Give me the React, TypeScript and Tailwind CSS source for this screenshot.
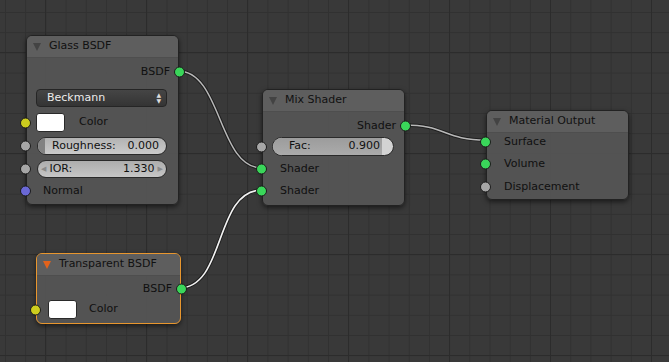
import type { ReactNode } from 'react';

const FONT = "font-['DejaVu_Sans','Liberation_Sans',sans-serif]";

type SocketKind = 'shader' | 'color' | 'value' | 'vector';

const socketColor: Record<SocketKind, string> = {
  shader: 'bg-[#3ad65a]',
  color: 'bg-[#cdcd1e]',
  value: 'bg-[#a6a6a6]',
  vector: 'bg-[#6a68d6]',
};

function Socket({ kind, side }: { kind: SocketKind; side: 'in' | 'out' }) {
  return (
    <span
      className={`absolute top-1/2 -translate-y-1/2 h-[11px] w-[11px] rounded-full border border-[#1b1b1b] ${socketColor[kind]} ${
        side === 'in' ? 'left-[-7px]' : 'right-[-7px]'
      }`}
    />
  );
}

function Header({ title, active }: { title: string; active?: boolean }) {
  return (
    <div className="flex items-center h-[22px] rounded-t-[5px] bg-[#5f5f5f]/90 border-b border-[#4e4e4e]">
      <span
        className={`ml-[6px] w-0 h-0 border-l-[4.5px] border-r-[4.5px] border-t-[8px] border-l-transparent border-r-transparent ${
          active ? 'border-t-[#e2621b]' : 'border-t-[#434343]'
        }`}
      />
      <span className="ml-[8px] text-[11px] text-[#111]">{title}</span>
    </div>
  );
}

function Row({ children, className = '' }: { children?: ReactNode; className?: string }) {
  return <div className={`relative flex items-center h-[18px] text-[11px] text-[#101010] ${className}`}>{children}</div>;
}

function Swatch() {
  return <span className="h-[19px] w-[29px] rounded-[3px] bg-white border border-[#2a2a2a]" />;
}

export default function App() {
  return (
    <div
      className={`relative w-[669px] h-[362px] overflow-hidden bg-[#393939] ${FONT} [background-image:linear-gradient(to_right,#2c2c2c_1px,transparent_1px),linear-gradient(to_bottom,#2c2c2c_1px,transparent_1px),linear-gradient(to_right,#313131_1px,transparent_1px),linear-gradient(to_bottom,#313131_1px,transparent_1px)] [background-size:101px_101px,101px_101px,20.2px_20.2px,20.2px_20.2px] [background-position:45px_52px,45px_52px,5px_12px,5px_12px]`}
    >
      {/* links */}
      <svg className="absolute inset-0" width={669} height={362}>
        <g fill="none" strokeLinecap="round">
          <path d="M178 71 C 222 71, 218 168, 262 168" stroke="#1e1e1e" strokeWidth={3.5} />
          <path d="M178 71 C 222 71, 218 168, 262 168" stroke="#b8b8b8" strokeWidth={1.5} />
          <path d="M179 288 C 226 288, 214 190, 262 190" stroke="#1e1e1e" strokeWidth={3.5} />
          <path d="M179 288 C 226 288, 214 190, 262 190" stroke="#f2f2f2" strokeWidth={1.6} />
          <path d="M404 125 C 446 125, 444 140, 486 140" stroke="#1e1e1e" strokeWidth={3.5} />
          <path d="M404 125 C 446 125, 444 140, 486 140" stroke="#b8b8b8" strokeWidth={1.5} />
        </g>
      </svg>

      {/* Glass BSDF */}
      <div className="absolute left-[26px] top-[35px] w-[153px] h-[170px] rounded-[6px] border border-[#222] bg-[#575757]/90 shadow-[0_2px_5px_rgba(0,0,0,0.55)]">
        <Header title="Glass BSDF" />
        <Row className="mt-[5px] justify-end pr-[8px]">
          BSDF
          <Socket kind="shader" side="out" />
        </Row>
        <div className="mt-[8px] ml-[9px] w-[131px] h-[18px] flex items-center justify-between rounded-[4px] border border-[#252525] bg-[linear-gradient(#454545,#343434)] pl-[10px] pr-[5px] text-[11px] text-[#ececec]">
          <span>Beckmann</span>
          <span className="flex flex-col items-center leading-none text-[6px] text-[#dcdcdc]">
            <span>▲</span>
            <span>▼</span>
          </span>
        </div>
        <Row className="mt-[6px] h-[19px] pl-[9px]">
          <Socket kind="color" side="in" />
          <Swatch />
          <span className="ml-[14px]">Color</span>
        </Row>
        <Row className="mt-[5px] pl-[10px]">
          <Socket kind="value" side="in" />
          <div className="relative w-[130px] h-[18px] rounded-full border border-[#2a2a2a] bg-[linear-gradient(#b3b3b3,#cbcbcb)] overflow-hidden flex items-center justify-between pl-[14px] pr-[7px]">
            <span className="absolute left-0 top-0 bottom-0 w-[7px] bg-[#828282]" />
            <span className="relative">Roughness:</span>
            <span className="relative">0.000</span>
          </div>
        </Row>
        <Row className="mt-[5px] pl-[10px]">
          <Socket kind="value" side="in" />
          <div className="w-[130px] h-[18px] rounded-full border border-[#2a2a2a] bg-[linear-gradient(#adadad,#c6c6c6)] flex items-center pl-[3px] pr-[3px]">
            <span className="text-[7px] text-[#8a8a8a]">◀</span>
            <span className="ml-[3px]">IOR:</span>
            <span className="ml-auto mr-[3px]">1.330</span>
            <span className="text-[7px] text-[#8a8a8a]">▶</span>
          </div>
        </Row>
        <Row className="mt-[4px] pl-[16px]">
          <Socket kind="vector" side="in" />
          Normal
        </Row>
      </div>

      {/* Transparent BSDF */}
      <div className="absolute left-[36px] top-[253px] w-[145px] h-[71px] rounded-[6px] border border-[#e8962e] bg-[#575757]/90 shadow-[0_2px_5px_rgba(0,0,0,0.55)]">
        <Header title="Transparent BSDF" active />
        <Row className="mt-[4px] justify-end pr-[8px]">
          BSDF
          <Socket kind="shader" side="out" />
        </Row>
        <Row className="mt-[2px] h-[19px] pl-[11px]">
          <Socket kind="color" side="in" />
          <Swatch />
          <span className="ml-[12px]">Color</span>
        </Row>
      </div>

      {/* Mix Shader */}
      <div className="absolute left-[262px] top-[89px] w-[143px] h-[117px] rounded-[6px] border border-[#222] bg-[#575757]/90 shadow-[0_2px_5px_rgba(0,0,0,0.55)]">
        <Header title="Mix Shader" />
        <Row className="mt-[5px] justify-end pr-[8px]">
          Shader
          <Socket kind="shader" side="out" />
        </Row>
        <Row className="mt-[2px] h-[19px] pl-[9px]">
          <Socket kind="value" side="in" />
          <div className="relative w-[122px] h-[19px] rounded-full border border-[#2a2a2a] bg-[#d3d3d3] overflow-hidden flex items-center justify-between pl-[16px] pr-[13px]">
            <span className="absolute left-0 top-0 bottom-0 w-[109px] bg-[linear-gradient(#9c9c9c,#ababab)]" />
            <span className="relative">Fac:</span>
            <span className="relative">0.900</span>
          </div>
        </Row>
        <Row className="mt-[4px] pl-[17px]">
          <Socket kind="shader" side="in" />
          Shader
        </Row>
        <Row className="mt-[4px] pl-[17px]">
          <Socket kind="shader" side="in" />
          Shader
        </Row>
      </div>

      {/* Material Output */}
      <div className="absolute left-[486px] top-[110px] w-[143px] h-[90px] rounded-[6px] border border-[#222] bg-[#575757]/90 shadow-[0_2px_5px_rgba(0,0,0,0.55)]">
        <Header title="Material Output" />
        <Row className="pl-[17px]">
          <Socket kind="shader" side="in" />
          Surface
        </Row>
        <Row className="mt-[4px] pl-[17px]">
          <Socket kind="shader" side="in" />
          Volume
        </Row>
        <Row className="mt-[5px] pl-[17px]">
          <Socket kind="value" side="in" />
          Displacement
        </Row>
      </div>
    </div>
  );
}
